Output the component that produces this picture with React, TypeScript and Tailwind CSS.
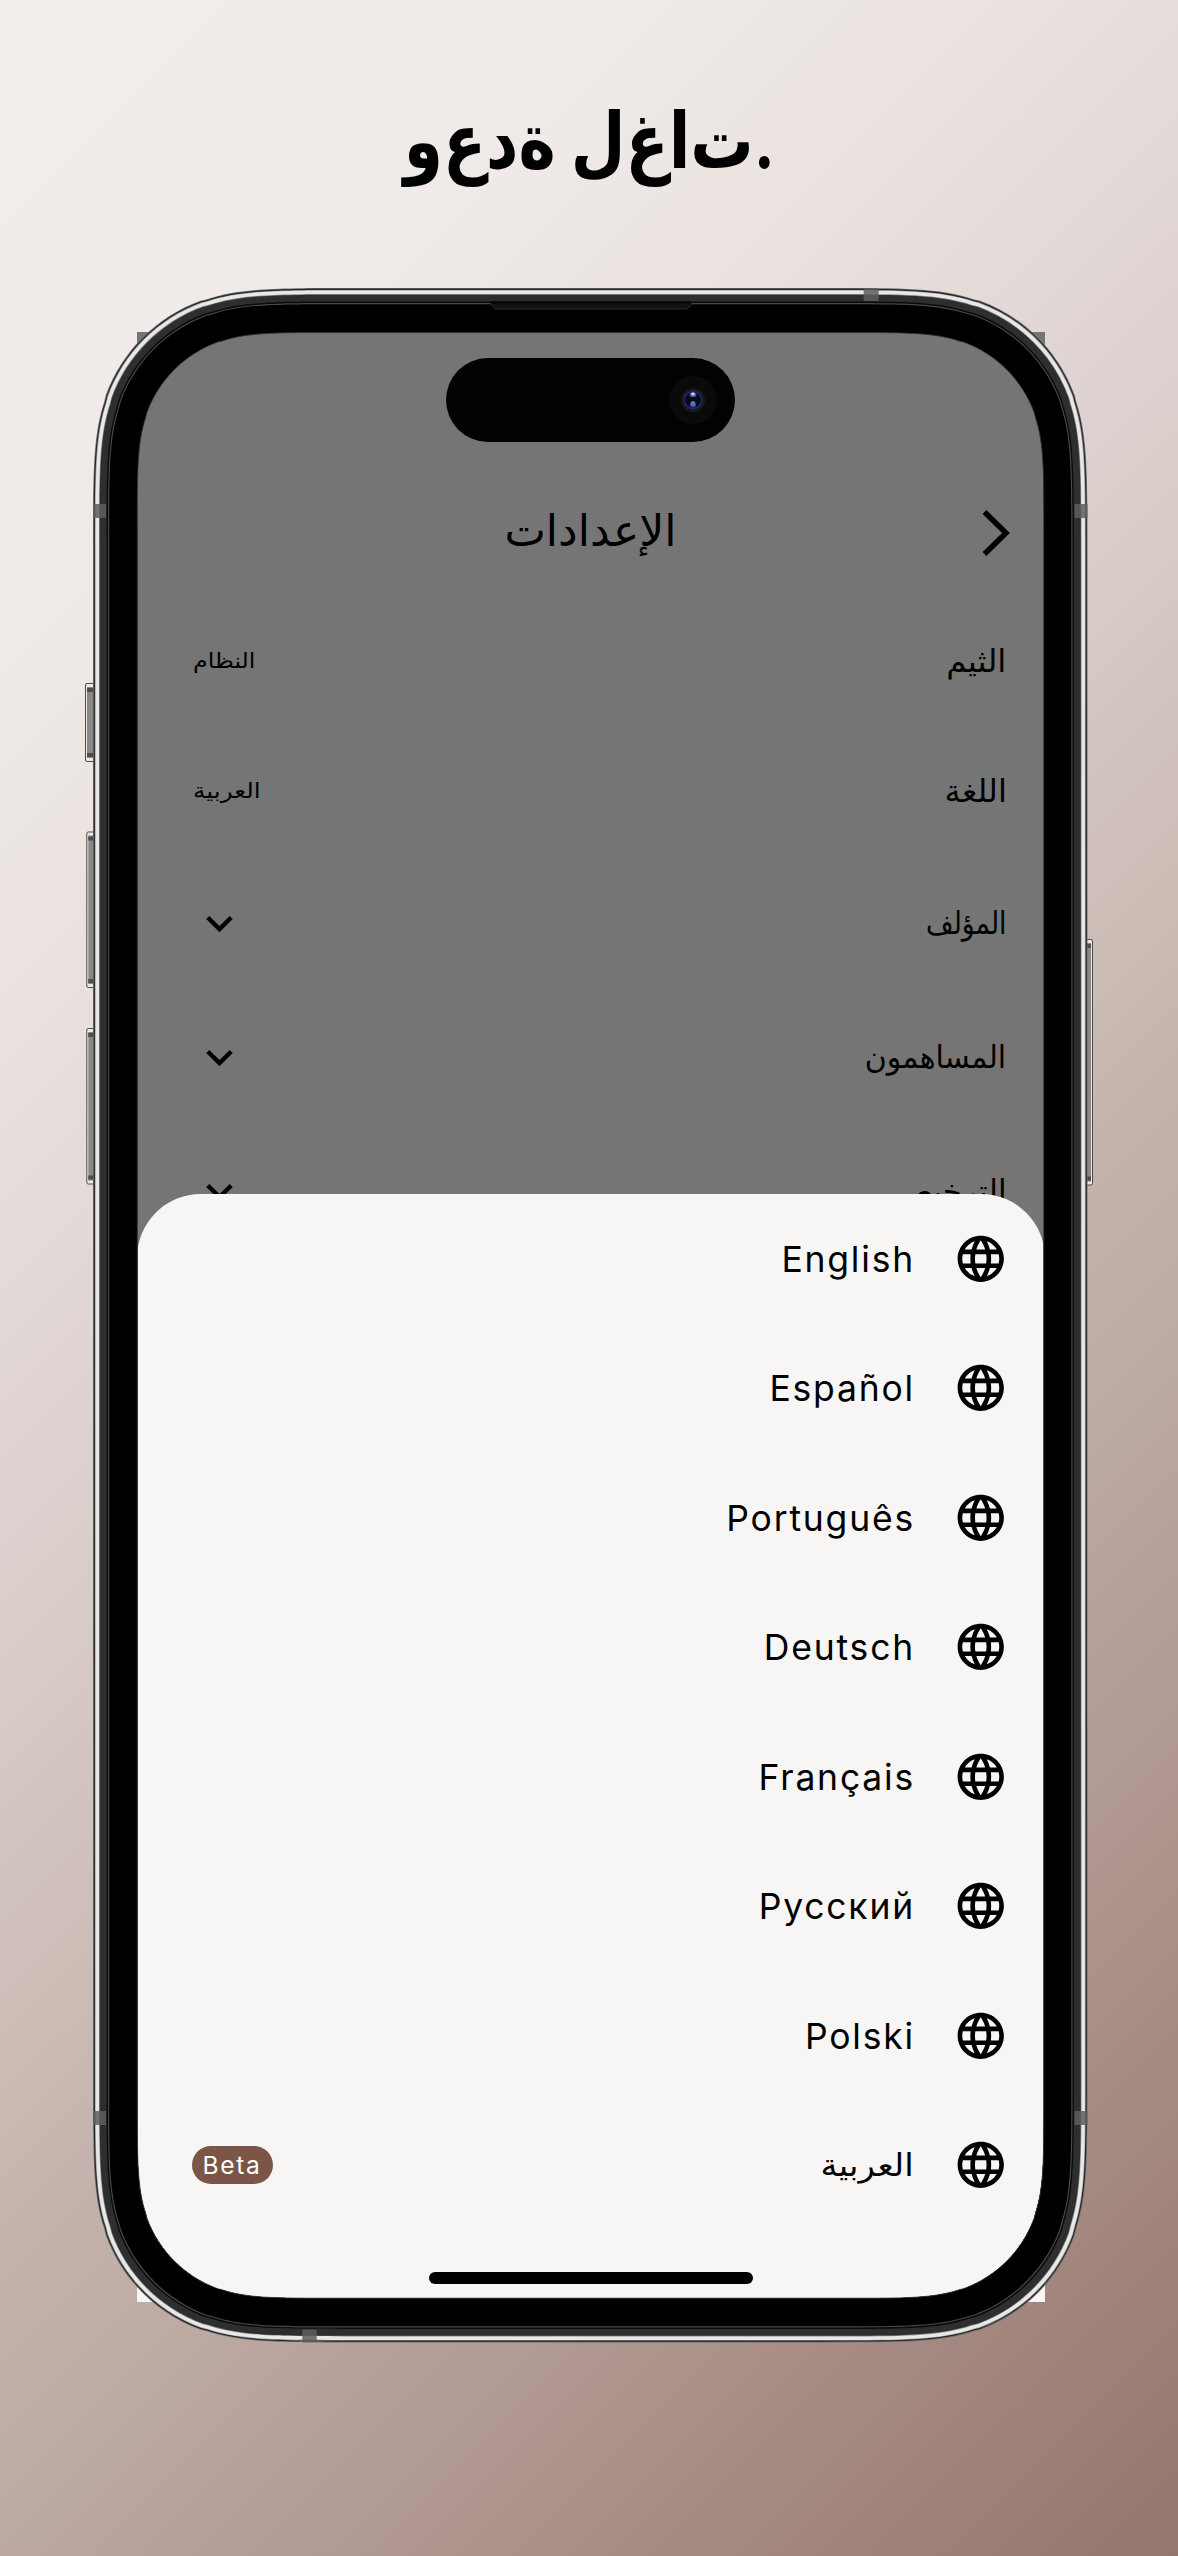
import React from "react";
import { MdLanguage, MdKeyboardArrowDown } from "react-icons/md";

const W = 1178;
const H = 2556;

const OUT = { l: 93, t: 288, r: 1087.5, b: 2342.5, rad: 170 };

// Rounded rectangle with continuous-curvature corners.
function squircle(l: number, t: number, r: number, b: number, R: number) {
  const a = 1.52866 * R, c = 1.08849 * R, d = 0.86841 * R, e = 0.66993 * R, f = 0.06549 * R;
  const g = 0.63149 * R, h = 0.07491 * R, i = 0.37282 * R, j = 0.16906 * R;
  return [
    `M${l + a} ${t}L${r - a} ${t}`,
    `C${r - c} ${t} ${r - d} ${t} ${r - e} ${t + f}L${r - g} ${t + h}`,
    `C${r - i} ${t + j} ${r - j} ${t + i} ${r - h} ${t + g}L${r - f} ${t + e}`,
    `C${r} ${t + d} ${r} ${t + c} ${r} ${t + a}L${r} ${b - a}`,
    `C${r} ${b - c} ${r} ${b - d} ${r - f} ${b - e}L${r - h} ${b - g}`,
    `C${r - j} ${b - i} ${r - i} ${b - j} ${r - g} ${b - h}L${r - e} ${b - f}`,
    `C${r - d} ${b} ${r - c} ${b} ${r - a} ${b}L${l + a} ${b}`,
    `C${l + c} ${b} ${l + d} ${b} ${l + e} ${b - f}L${l + g} ${b - h}`,
    `C${l + i} ${b - j} ${l + j} ${b - i} ${l + h} ${b - g}L${l + f} ${b - e}`,
    `C${l} ${b - d} ${l} ${b - c} ${l} ${b - a}L${l} ${t + a}`,
    `C${l} ${t + c} ${l} ${t + d} ${l + f} ${t + e}L${l + h} ${t + g}`,
    `C${l + j} ${t + i} ${l + i} ${t + j} ${l + g} ${t + h}L${l + e} ${t + f}`,
    `C${l + d} ${t} ${l + c} ${t} ${l + a} ${t}Z`,
  ].join("");
}

const inset = (o: number) =>
  squircle(OUT.l + o, OUT.t + o, OUT.r - o, OUT.b - o, OUT.rad - o * 0.97);
const hole = squircle(137.3, 332.6, 1043.8, 2298.2, 127);

const layers: [number, string][] = [
  [0, "#6b6b6b"],
  [0.8, "#262626"],
  [1.9, "#9a9a9a"],
  [2.6, "#e8e8e8"],
  [6, "#8a8a8a"],
  [6.7, "#2f2e2e"],
  [13.6, "#0a0a0a"],
  [15, "#484848"],
  [16.2, "#000000"],
];

const bands = [
  [93, 504, 13, 14],
  [1074.5, 504, 13, 14],
  [863.7, 288, 15, 13],
  [93, 2111, 13, 14],
  [1074.5, 2111, 13, 14],
  [302.3, 2329.5, 14.4, 13],
];

function SideButton({ x, y, w, h, flip }: { x: number; y: number; w: number; h: number; flip?: boolean }) {
  return (
    <g transform={flip ? `translate(${2 * x + w} 0) scale(-1 1)` : undefined}>
      <rect x={x + 0.5} y={y + 0.5} width={w} height={h - 1} rx={1.5} fill="#e9e9e9" stroke="#4b4b4b" />
      <rect x={x + 2} y={y + 4} width={w - 2} height={h - 8} fill="#8a8886" />
      <rect x={x + 2} y={y + 5} width={w - 2} height={4} fill="#4d4d4d" />
      <rect x={x + 2} y={y + h - 9} width={w - 2} height={4} fill="#4d4d4d" />
    </g>
  );
}

function DeviceFrame() {
  return (
    <svg className="pointer-events-none absolute inset-0" width={W} height={H} viewBox={`0 0 ${W} ${H}`}>
      <SideButton x={85} y={683} w={9} h={79} />
      <SideButton x={86.3} y={831.5} w={8} h={156.5} />
      <SideButton x={86.3} y={1028} w={8} h={156.5} />
      <SideButton x={1086} y={939} w={7} h={246.5} flip />
      {layers.map(([o, c]) => (
        <path key={o} d={inset(o) + hole} fill={c} fillRule="evenodd" />
      ))}
      <path d="M490 303.5L495 309H687L692 303.5Z" fill="#111111" stroke="#2c2c2c" />
      <rect x={491} y={301} width={200} height={3} fill="#0a0a0a" />
      {bands.map(([x, y, w, h]) => (
        <rect key={`${x}-${y}`} x={x} y={y} width={w} height={h} fill="#5e5e5e" fillOpacity={0.85} />
      ))}
      <path d={hole} fill="none" stroke="#3a3a3a" strokeWidth={0.8} />
    </svg>
  );
}

function Island() {
  return (
    <div
      dir="ltr"
      className="absolute top-[26px] left-[309px] flex h-[84px] w-[289px] items-center justify-end rounded-full bg-[#020202] pr-[18px]"
    >
      <svg width="48" height="48" viewBox="0 0 48 48">
        <circle cx="24" cy="24" r="24" fill="#0a0a0a" />
        <circle cx="24" cy="24.5" r="12" fill="#191919" />
        <circle cx="24" cy="24" r="8.6" fill="#070a1c" stroke="#1f2a78" strokeWidth="1.4" />
        <ellipse cx="24" cy="18.5" rx="3.4" ry="2.6" fill="#5a50a8" />
        <circle cx="24" cy="18" r="1.6" fill="#d9d6ee" />
        <ellipse cx="24" cy="29.5" rx="3.2" ry="2.2" fill="#5a1f9a" />
        <circle cx="24" cy="27.6" r="2.5" fill="#3f83b5" />
      </svg>
    </div>
  );
}

const settings = [
  { label: "الثيم", value: "النظام", row: "h-[130px]", fit: "scale-x-[1.05]", valueFit: "scale-x-[1.13]" },
  { label: "اللغة", value: "العربية", row: "h-[130px]", fit: "scale-x-[1.04]", valueFit: "scale-x-[1.18]" },
  { label: "المؤلف", row: "h-[134px]", fit: "scale-x-[0.86]" },
  { label: "المساهمون", row: "h-[134px]", fit: "scale-x-[0.967]" },
  { label: "الترخيص", row: "h-[134px]", fit: "scale-x-100" },
];

const languages = [
  { name: "English" },
  { name: "Español" },
  { name: "Português" },
  { name: "Deutsch" },
  { name: "Français" },
  { name: "Русский" },
  { name: "Polski" },
  { name: "العربية", arabic: true, beta: true },
];

export default function App() {
  return (
    <div className="relative flex h-[2556px] w-[1178px] flex-col items-center overflow-hidden bg-[linear-gradient(135deg,#f2eeeb_0%,#efeae7_19%,#e7dedb_31%,#d8ccc9_45%,#c5b4ad_60%,#b7a39c_72%,#a68b84_86%,#94766c_100%)] font-['Inter','DejaVu_Sans',sans-serif] text-black">
      <h1
        dir="ltr"
        className="flex h-[332px] scale-x-[0.82] items-start pt-[90px] text-[77px] leading-[100px] font-bold [unicode-bidi:bidi-override] [font-feature-settings:'init'_0,'medi'_0,'fina'_0,'rlig'_0]"
      >
        وعدة لغات.
      </h1>

      <div dir="rtl" className="relative ml-[3px] h-[1970px] w-[908px] shrink-0 overflow-hidden bg-[#757575]">
        <div className="flex h-[264px] items-end justify-between pr-[35px] pb-[39px] pl-[35px]">
          <svg width="28" height="48" viewBox="0 0 28 48">
            <path d="M2.5 3L24 24L2.5 45" fill="none" stroke="#000" strokeWidth="5.4" />
          </svg>
          <h2 className="pb-[3px] text-[44px] leading-[48px]">الإعدادات</h2>
          <span className="w-[28px]" />
        </div>
        <ul>
          {settings.map((s) => (
            <li key={s.label} className={`flex items-center justify-between pr-[38px] pl-[56px] ${s.row}`}>
              <span className={`origin-right text-[31px] ${s.fit}`}>{s.label}</span>
              {s.value ? (
                <span className={`origin-left text-[21px] ${s.valueFit}`}>{s.value}</span>
              ) : (
                <MdKeyboardArrowDown size={53} />
              )}
            </li>
          ))}
        </ul>

        <Island />

        <div className="absolute inset-x-0 bottom-0 flex h-[1108.5px] flex-col items-center rounded-t-[64px] bg-[#f7f6f5]">
          <ul className="w-full">
            {languages.map((l) => (
              <li key={l.name} className="flex h-[129.5px] items-center pr-[36px] pl-[55px]">
                <MdLanguage size={55.5} />
                <span
                  className={
                    l.arabic
                      ? "mr-[39px] origin-right scale-x-[1.1] text-[31px]"
                      : "mr-[38px] pt-[2px] text-[35.5px] tracking-[1.8px]"
                  }
                >
                  {l.name}
                </span>
                {l.beta && (
                  <span className="mr-auto flex h-[37.5px] w-[81px] items-center justify-center rounded-full bg-[#7b5546] pt-px text-[24.5px] tracking-[1.7px] text-white">
                    Beta
                  </span>
                )}
              </li>
            ))}
          </ul>
          <span className="mt-[42.5px] h-[11.5px] w-[324px] rounded-full bg-black" />
        </div>
      </div>

      <DeviceFrame />
    </div>
  );
}
